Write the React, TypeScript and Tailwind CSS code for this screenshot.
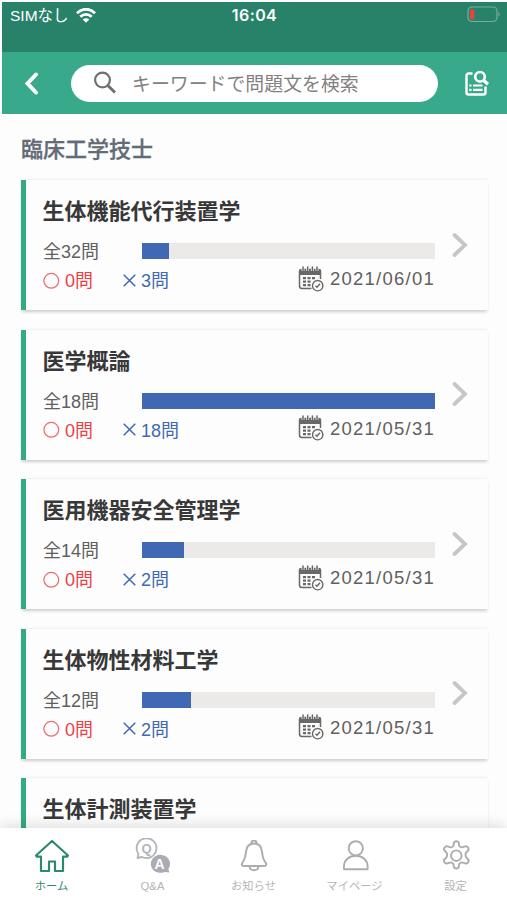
import type { ReactNode } from 'react';

interface Stats {
  total: number;
  correct: number;
  wrong: number;
  progress: number;
  date: string;
}

interface Subject {
  name: string;
  stats?: Stats;
}

const SUBJECTS: Subject[] = [
  { name: '生体機能代行装置学', stats: { total: 32, correct: 0, wrong: 3, progress: 9.5, date: '2021/06/01' } },
  { name: '医学概論', stats: { total: 18, correct: 0, wrong: 18, progress: 100, date: '2021/05/31' } },
  { name: '医用機器安全管理学', stats: { total: 14, correct: 0, wrong: 2, progress: 14.4, date: '2021/05/31' } },
  { name: '生体物性材料工学', stats: { total: 12, correct: 0, wrong: 2, progress: 16.9, date: '2021/05/31' } },
  { name: '生体計測装置学' },
];

function WifiIcon() {
  return (
    <svg width="20" height="15" viewBox="0 0 20 15" fill="none" stroke="white" strokeWidth="2.8">
      <path d="M1 5.2C6-.1 14-.1 19 5.2" />
      <path d="M4.3 8.8c3.300-3.200 8.100-3.200 11.400 0" />
      <path d="M10 14.8 6.700 11.500c1.900-1.700 4.700-1.700 6.600 0z" fill="white" stroke="none" />
    </svg>
  );
}

function BatteryIcon() {
  return (
    <svg width="34" height="17" viewBox="0 0 34 17" fill="none">
      <rect x="1" y="1" width="29" height="14.5" rx="4" stroke="#75ae9b" strokeWidth="1.200" />
      <rect x="3" y="3.200" width="4.500" height="10.300" rx="1.800" fill="#e9443a" />
      <path d="M31.500 6v4.500c1.800-.7 1.800-3.800 0-4.500z" fill="#75ae9b" />
    </svg>
  );
}

function ListSearchIcon() {
  return (
    <svg width="26" height="28" viewBox="0 0 26 28" fill="none" stroke="white">
      <path d="M8.500 4.500H4.500A2 2 0 0 0 2.500 6.500v17A2 2 0 0 0 4.500 25.500h15a2 2 0 0 0 2-2v-6" strokeWidth="2.400" />
      <circle cx="16" cy="7.800" r="4.800" strokeWidth="2.600" />
      <path d="m19.500 11.300 4.500 4" strokeWidth="3.200" />
      <path d="M9 16.500h9.500M9 20.800h9.500" strokeWidth="2.200" />
      <path d="M5.300 16.500h2.200M5.300 20.800h2.200" strokeWidth="2.200" />
    </svg>
  );
}

function CalendarIcon() {
  return (
    <svg width="26" height="26" viewBox="0 0 26 26" fill="none" stroke="#686868">
      <path d="M22.500 13V5.500A2 2 0 0 0 20.500 3.500H3.500a2 2 0 0 0-2 2V20a2.500 2.500 0 0 0 2.500 2.500h9.500" strokeWidth="1.500" />
      <path d="M1 9V5a2 2 0 0 1 2-2h18a2 2 0 0 1 2 2v4z" fill="#686868" stroke="none" />
      <path d="M5 0v5M9.700 0v5M14.400 0v5M19 0v5" stroke="#fdfdfd" strokeWidth="2.800" />
      <path d="M5 1v3.500M9.700 1v3.500M14.400 1v3.500M19 1v3.500" strokeWidth="1.500" strokeLinecap="round" />
      <path d="M5 12.200h13.500M5 15.700h8.500M5 19.200h8" strokeWidth="2.200" strokeDasharray="3 1.500" />
      <circle cx="19.700" cy="19.700" r="5.200" fill="#fdfdfd" strokeWidth="1.400" />
      <path d="m17.500 19.800 1.500 1.500 3-3.500" strokeWidth="1.400" />
    </svg>
  );
}

function CardStats({ stats }: { stats: Stats }) {
  return (
    <>
      <div className="mt-[14px] flex h-5 items-center">
        <span className="mt-[2px] w-[98.500px] text-[18px] leading-5 text-[#606060]">全{stats.total}問</span>
        <div className="h-4 flex-1 bg-[#ebeae9]">
          <div className="h-full bg-[#4169b3]" style={{ width: `${stats.progress}%` }} />
        </div>
      </div>
      <div className="mt-[6px] flex h-[26px] items-center text-[18px] leading-[26px]">
        <span className="flex w-[80px] items-center text-[#ec3f45]">
          <svg width="17" height="17" viewBox="0 0 17 17" fill="none" stroke="#ee6a6e" strokeWidth="1.200">
            <circle cx="8.300" cy="8.800" r="7.400" />
          </svg>
          <span className="mt-[2px] ml-[5px]">{stats.correct}問</span>
        </span>
        <span className="flex items-center text-[#4169b3]">
          <svg width="13" height="13" viewBox="0 0 13 13" stroke="#4169b3" strokeWidth="1.500">
            <path d="m.7.7 11.600 11.600M12.300.7.7 12.300" />
          </svg>
          <span className="mt-[2px] ml-[5px]">{stats.wrong}問</span>
        </span>
        <span className="mt-[-3px] ml-auto flex items-center text-[18.500px] text-[#606060]">
          <CalendarIcon />
          <span className="mt-px ml-[6px] tracking-[1.250px]">{stats.date}</span>
        </span>
      </div>
    </>
  );
}

function SubjectCard({ subject }: { subject: Subject }) {
  return (
    <li className="flex h-[130px] shrink-0 border-l-[5px] border-[#32ab83] bg-[#fdfdfd] pl-[17px] shadow-[0_3px_3px_-1px_rgba(0,0,0,0.19),0_-2px_2px_-1px_rgba(0,0,0,0.06)]">
      <div className="flex w-[392px] flex-col pt-[17px]">
        <h2 className="ml-[-0.500px] h-[30px] text-[22px] leading-[30px] font-bold text-[#383838]">{subject.name}</h2>
        {subject.stats && <CardStats stats={subject.stats} />}
      </div>
      <svg className="mt-[51.500px] ml-[17px]" width="16" height="26" viewBox="0 0 16 26" fill="none" stroke="#c6c6c6" strokeWidth="3.800">
        <path d="M2.500 3 13 13 2.500 23" strokeLinecap="round" />
      </svg>
    </li>
  );
}

function HomeIcon() {
  return (
    <svg width="36" height="34" viewBox="0 0 36 34" fill="none" stroke="#2b8a6b" strokeWidth="2.200" strokeLinejoin="round">
      <path d="M18 2 2 16.500l1 1.200h4V32h8V22.500h6V32h8V17.700h4l1-1.200z" />
    </svg>
  );
}

function QaIcon() {
  return (
    <span className="relative">
      <svg width="36" height="36" viewBox="0 0 36 36" fill="none" stroke="#b3b4b8" strokeWidth="1.800">
        <path d="M3.500 16A9.900 9.900 0 1 1 7 19L2.500 20z" strokeLinejoin="round" />
        <path d="M34.500 34.500 33.300 31A9.600 9 0 1 0 29.500 34z" fill="#aaabb3" stroke="none" />
      </svg>
      <span className="absolute top-[4px] left-[6px] w-3 text-center text-[13px] leading-[14px] font-bold text-[#b3b4b8]">Q</span>
      <span className="absolute top-[19px] left-[19px] w-3 text-center text-[14px] leading-[14px] font-bold text-white">A</span>
    </span>
  );
}

function BellIcon() {
  return (
    <svg width="28" height="32" viewBox="0 0 28 32" fill="none" stroke="#acadaf" strokeWidth="2" strokeLinejoin="round">
      <path d="M11.500 4V3a2.500 2.500 0 0 1 5 0v1" />
      <path d="M14 3.500c-5 0-7.500 3.500-8 8-.4 5-1 8-3.800 11.500-.9 1.600-.2 3 1.300 3h21c1.500 0 2.200-1.400 1.300-3C23 19.500 22.400 16.500 22 11.500c-.5-4.500-3-8-8-8z" />
      <path d="M9.500 26.500c.5 5 8.500 5 9 0" />
    </svg>
  );
}

function PersonIcon() {
  return (
    <svg width="28" height="31" viewBox="0 0 28 31" fill="none" stroke="#acadaf" strokeWidth="1.900" strokeLinejoin="round">
      <circle cx="14.800" cy="8.300" r="7.100" />
      <path d="M3 29.300v-3c0-6 5-10.500 11.800-10.500s11.800 4.500 11.800 10.500v3z" />
    </svg>
  );
}

function GearIcon() {
  return (
    <svg width="30" height="32" viewBox="0 0 30 32" fill="none" stroke="#acadaf" strokeWidth="1.900" strokeLinejoin="round">
      <path d="M13 2.300q2.300-2 4.600 0l.7 3.700q1 1.300 2.700 1.400l4-1.300q2.800.9 2.700 3.700l-2.900 3.200q-.5 1.900 0 3.800l2.900 3.200q.1 2.800-2.700 3.700l-4-1.300q-1.700.1-2.700 1.400l-.7 3.700q-2.300 2-4.600 0l-.7-3.700q-1-1.300-2.700-1.400l-4 1.300q-2.800-.9-2.700-3.700l2.900-3.200q.5-1.900 0-3.800l-2.900-3.200q-.1-2.800 2.700-3.700l4 1.300q1.700-.1 2.700-1.400z" />
      <circle cx="15.300" cy="15.700" r="5.300" />
    </svg>
  );
}

function Tab({ icon, label, active }: { icon: ReactNode; label: string; active?: boolean }) {
  return (
    <button type="button" className="flex flex-1 flex-col items-center pt-[9px]">
      <span className="flex h-[37px] items-center justify-center">{icon}</span>
      <span className={`mt-[4px] text-[11.300px] leading-4 ${active ? 'text-[#2b8a6b]' : 'text-[#b5b5b8]'}`}>{label}</span>
    </button>
  );
}

export default function App() {
  return (
    <div
      className="flex h-[900px] w-[507px] flex-col overflow-hidden bg-[#fdfdfd] pt-[2px]"
      style={{ fontFamily: '"Liberation Sans", "Noto Sans CJK JP", sans-serif' }}
    >
      <div className="ml-[2px] grid h-[50px] shrink-0 grid-cols-3 items-start bg-[#28826a] pt-[3px] text-white">
        <div className="flex h-5 items-center pl-[8px] text-[15.500px] leading-5">
          <span className="mt-[2px]">SIMなし</span>
          <span className="ml-[7px]"><WifiIcon /></span>
        </div>
        <span
          className="text-center text-[16px] leading-[21px] font-semibold tracking-[0.400px]"
          style={{ fontFamily: 'Inter, sans-serif' }}
        >
          16:04
        </span>
        <div className="flex justify-end pt-[1px] pr-[6px]"><BatteryIcon /></div>
      </div>

      <header className="ml-[2px] flex h-[62px] shrink-0 items-center bg-[#38a98a] pl-[22px]">
        <svg width="16" height="24" viewBox="0 0 16 24" fill="none" stroke="white" strokeWidth="4">
          <path d="M12 3.500 3.500 12.500l8.500 9" strokeLinecap="round" />
        </svg>
        <div className="ml-[31px] flex h-[37px] w-[367px] items-center rounded-full bg-white pl-[22px]">
          <svg width="24" height="24" viewBox="0 0 24 24" fill="none" stroke="#707070">
            <circle cx="9.500" cy="9" r="7.400" strokeWidth="2.200" />
            <path d="m14.800 14.500 7.200 7" strokeWidth="3" />
          </svg>
          <span className="mt-[3px] ml-[15px] text-[18.900px] leading-7 text-[#858080]">キーワードで問題文を検索</span>
        </div>
        <button type="button" className="ml-[26px]" aria-label="検索履歴"><ListSearchIcon /></button>
      </header>

      <main className="flex min-h-0 flex-1 flex-col overflow-hidden">
        <h1 className="mt-[20px] ml-[21px] h-8 shrink-0 text-[22px] leading-8 font-medium text-[#626b76] [-webkit-text-stroke:0.3px_#626b76]">臨床工学技士</h1>
        <ul className="mt-[14px] mr-[19px] ml-[21px] flex flex-col gap-[19.500px]">
          {SUBJECTS.map(subject => (
            <SubjectCard key={subject.name} subject={subject} />
          ))}
        </ul>
      </main>

      <nav className="relative flex h-[72px] shrink-0 bg-white px-[1px] shadow-[0_-3px_12px_rgba(0,0,0,0.12)]">
        <Tab icon={<HomeIcon />} label="ホーム" active />
        <Tab icon={<QaIcon />} label="Q&A" />
        <Tab icon={<BellIcon />} label="お知らせ" />
        <Tab icon={<PersonIcon />} label="マイページ" />
        <Tab icon={<GearIcon />} label="設定" />
      </nav>
    </div>
  );
}
